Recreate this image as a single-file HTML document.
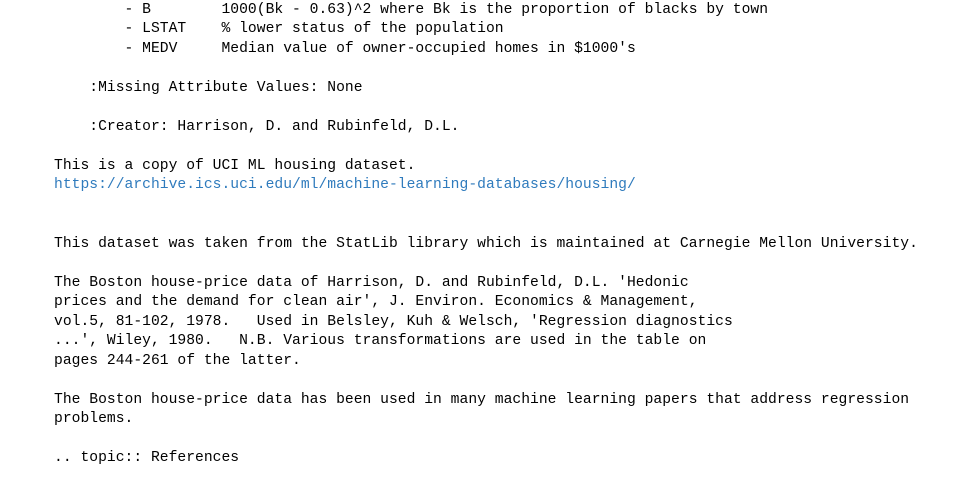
<!DOCTYPE html>
<html><head><meta charset="utf-8"><style>
html,body{margin:0;padding:0;background:#fff;width:960px;height:480px;overflow:hidden}
pre{position:absolute;left:54px;top:1px;margin:0;font-family:"Liberation Mono",monospace;font-size:14.67px;letter-spacing:0.02px;line-height:19.48px;color:#000}
a{color:#2f7bbd;text-decoration:none}
</style></head><body>
<pre>        - B        1000(Bk - 0.63)^2 where Bk is the proportion of blacks by town
        - LSTAT    % lower status of the population
        - MEDV     Median value of owner-occupied homes in $1000's

    :Missing Attribute Values: None

    :Creator: Harrison, D. and Rubinfeld, D.L.

This is a copy of UCI ML housing dataset.
<a>https://archive.ics.uci.edu/ml/machine-learning-databases/housing/</a>


This dataset was taken from the StatLib library which is maintained at Carnegie Mellon University.

The Boston house-price data of Harrison, D. and Rubinfeld, D.L. 'Hedonic
prices and the demand for clean air', J. Environ. Economics &amp; Management,
vol.5, 81-102, 1978.   Used in Belsley, Kuh &amp; Welsch, 'Regression diagnostics
...', Wiley, 1980.   N.B. Various transformations are used in the table on
pages 244-261 of the latter.

The Boston house-price data has been used in many machine learning papers that address regression
problems.

.. topic:: References
</pre>
</body></html>
